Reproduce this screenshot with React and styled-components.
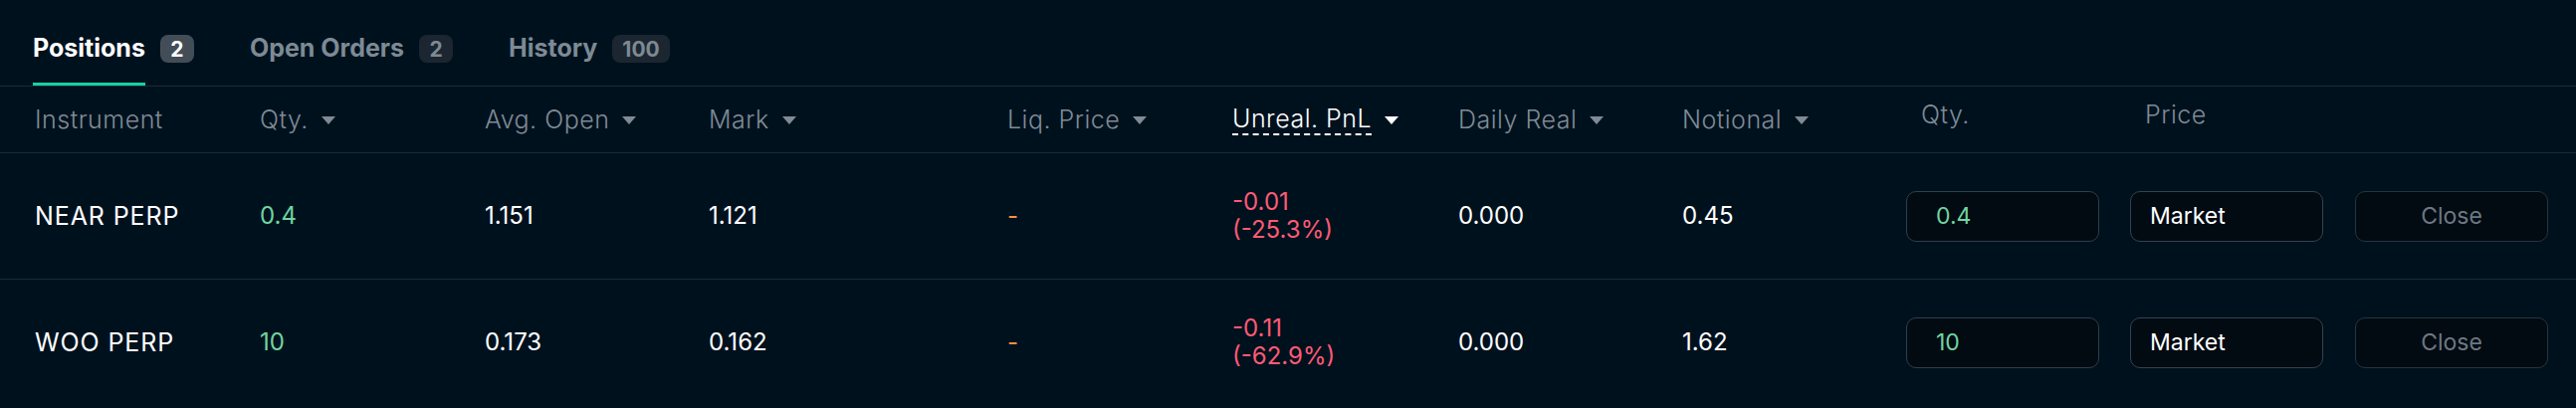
import styled, { createGlobalStyle } from 'styled-components'

const GlobalStyle = createGlobalStyle`
  html, body {
    margin: 0;
    padding: 0;
    background: #00111e;
  }
  body {
    font-family: Inter, "Noto Sans", sans-serif;
  }
`

const Panel = styled.div`
  width: 2588px;
  height: 410px;
  background: #00111e;
  border-radius: 22px 22px 0 0;
  overflow: hidden;
  color: #ffffff;
`

const TabBar = styled.div`
  display: flex;
  height: 86px;
  padding-left: 33px;
  gap: 56px;
  border-bottom: 1px solid #1d2934;
`

const Tab = styled.div`
  display: flex;
  align-items: stretch;
  gap: 15px;
`

const TabLabel = styled.span`
  display: flex;
  align-items: center;
  padding-top: 12px;
  font-size: 25px;
  font-weight: 700;
  color: ${p => (p.$active ? '#ffffff' : '#7d8a94')};
  border-bottom: 3px solid ${p => (p.$active ? '#13d2a8' : 'transparent')};
`

const Badge = styled.span`
  align-self: center;
  margin-top: 12px;
  height: 28px;
  min-width: 14px;
  padding: 0 10px;
  display: flex;
  align-items: center;
  justify-content: center;
  border-radius: 8px;
  font-size: 21px;
  font-weight: 700;
  background: ${p => (p.$active ? '#434d58' : '#1b2631')};
  color: ${p => (p.$active ? '#ffffff' : '#7d8a94')};
`

const cols = '226px 226px 225px 300px 226px 227px 225px 225px 225px 226px 1fr'

const HeadRow = styled.div`
  display: grid;
  grid-template-columns: ${cols};
  align-items: center;
  height: 66px;
  padding-left: 35px;
  border-bottom: 1px solid #1d2934;
`

const HeadCell = styled.div`
  display: flex;
  align-items: center;
  gap: 13px;
  font-size: 25px;
  font-weight: 300;
  letter-spacing: 0.5px;
  color: ${p => (p.$active ? '#ffffff' : '#7f8b95')};
  padding-left: ${p => (p.$inset ? '15px' : '0')};
  margin-bottom: ${p => (p.$inset ? '10px' : '0')};
`

const HeadText = styled.span`
  border-bottom: ${p => (p.$dashed ? '2px dashed #ffffff' : 'none')};
  line-height: 30px;
`

const Caret = styled.span`
  width: 0;
  height: 0;
  border-left: 7px solid transparent;
  border-right: 7px solid transparent;
  border-top: 8px solid ${p => (p.$active ? '#ffffff' : '#7f8b95')};
  margin-top: 2px;
`

const Row = styled.div`
  display: grid;
  grid-template-columns: ${cols};
  align-items: center;
  height: 126px;
  padding-left: 35px;
  border-bottom: ${p => (p.$last ? 'none' : '1px solid #1d2934')};
`

const Cell = styled.div`
  font-size: ${p => (p.$name ? '25px' : '24px')};
  font-weight: 400;
  line-height: 28px;
  letter-spacing: ${p => (p.$name ? '0.9px' : '0')};
  color: ${p => p.$color || '#ffffff'};
`

const Box = styled.div`
  box-sizing: border-box;
  width: 194px;
  height: 51px;
  display: flex;
  align-items: center;
  justify-content: ${p => (p.$center ? 'center' : 'flex-start')};
  padding-left: ${p => p.$pad || '0'};
  border: 1px solid ${p => p.$border || '#2f3e4b'};
  border-radius: 10px;
  background: #020a12;
  font-size: 23px;
  font-weight: 400;
  color: ${p => p.$color || '#ffffff'};
`

const headers = [
  { label: 'Instrument' },
  { label: 'Qty.', sort: true },
  { label: 'Avg. Open', sort: true },
  { label: 'Mark', sort: true },
  { label: 'Liq. Price', sort: true },
  { label: 'Unreal. PnL', sort: true, active: true },
  { label: 'Daily Real', sort: true },
  { label: 'Notional', sort: true },
  { label: 'Qty.', inset: true },
  { label: 'Price', inset: true },
]

const rows = [
  { name: 'NEAR PERP', qty: '0.4', avg: '1.151', mark: '1.121', pnl: '-0.01', pct: '(-25.3%)', daily: '0.000', notional: '0.45' },
  { name: 'WOO PERP', qty: '10', avg: '0.173', mark: '0.162', pnl: '-0.11', pct: '(-62.9%)', daily: '0.000', notional: '1.62' },
]

const GREEN = '#6fd5a0'
const RED = '#ff5a73'
const ORANGE = '#ff8f3f'

export default function App() {
  return (
    <>
      <GlobalStyle />
      <Panel>
        <TabBar>
          <Tab>
            <TabLabel $active>Positions</TabLabel>
            <Badge $active>2</Badge>
          </Tab>
          <Tab>
            <TabLabel>Open Orders</TabLabel>
            <Badge>2</Badge>
          </Tab>
          <Tab>
            <TabLabel>History</TabLabel>
            <Badge>100</Badge>
          </Tab>
        </TabBar>

        <HeadRow>
          {headers.map((h, i) => (
            <HeadCell key={i} $active={h.active} $inset={h.inset}>
              <HeadText $dashed={h.active}>{h.label}</HeadText>
              {h.sort && <Caret $active={h.active} />}
            </HeadCell>
          ))}
        </HeadRow>

        {rows.map((r, i) => (
          <Row key={r.name} $last={i === rows.length - 1}>
            <Cell $name>{r.name}</Cell>
            <Cell $color={GREEN}>{r.qty}</Cell>
            <Cell>{r.avg}</Cell>
            <Cell>{r.mark}</Cell>
            <Cell $color={ORANGE}>-</Cell>
            <Cell $color={RED}>
              <div>{r.pnl}</div>
              <div>{r.pct}</div>
            </Cell>
            <Cell>{r.daily}</Cell>
            <Cell>{r.notional}</Cell>
            <Box $pad="29px" $color={GREEN}>{r.qty}</Box>
            <Box $pad="19px" $border="#34434f">Market</Box>
            <Box $center $color="#6c7883" $border="#26343f">Close</Box>
          </Row>
        ))}
      </Panel>
    </>
  )
}
